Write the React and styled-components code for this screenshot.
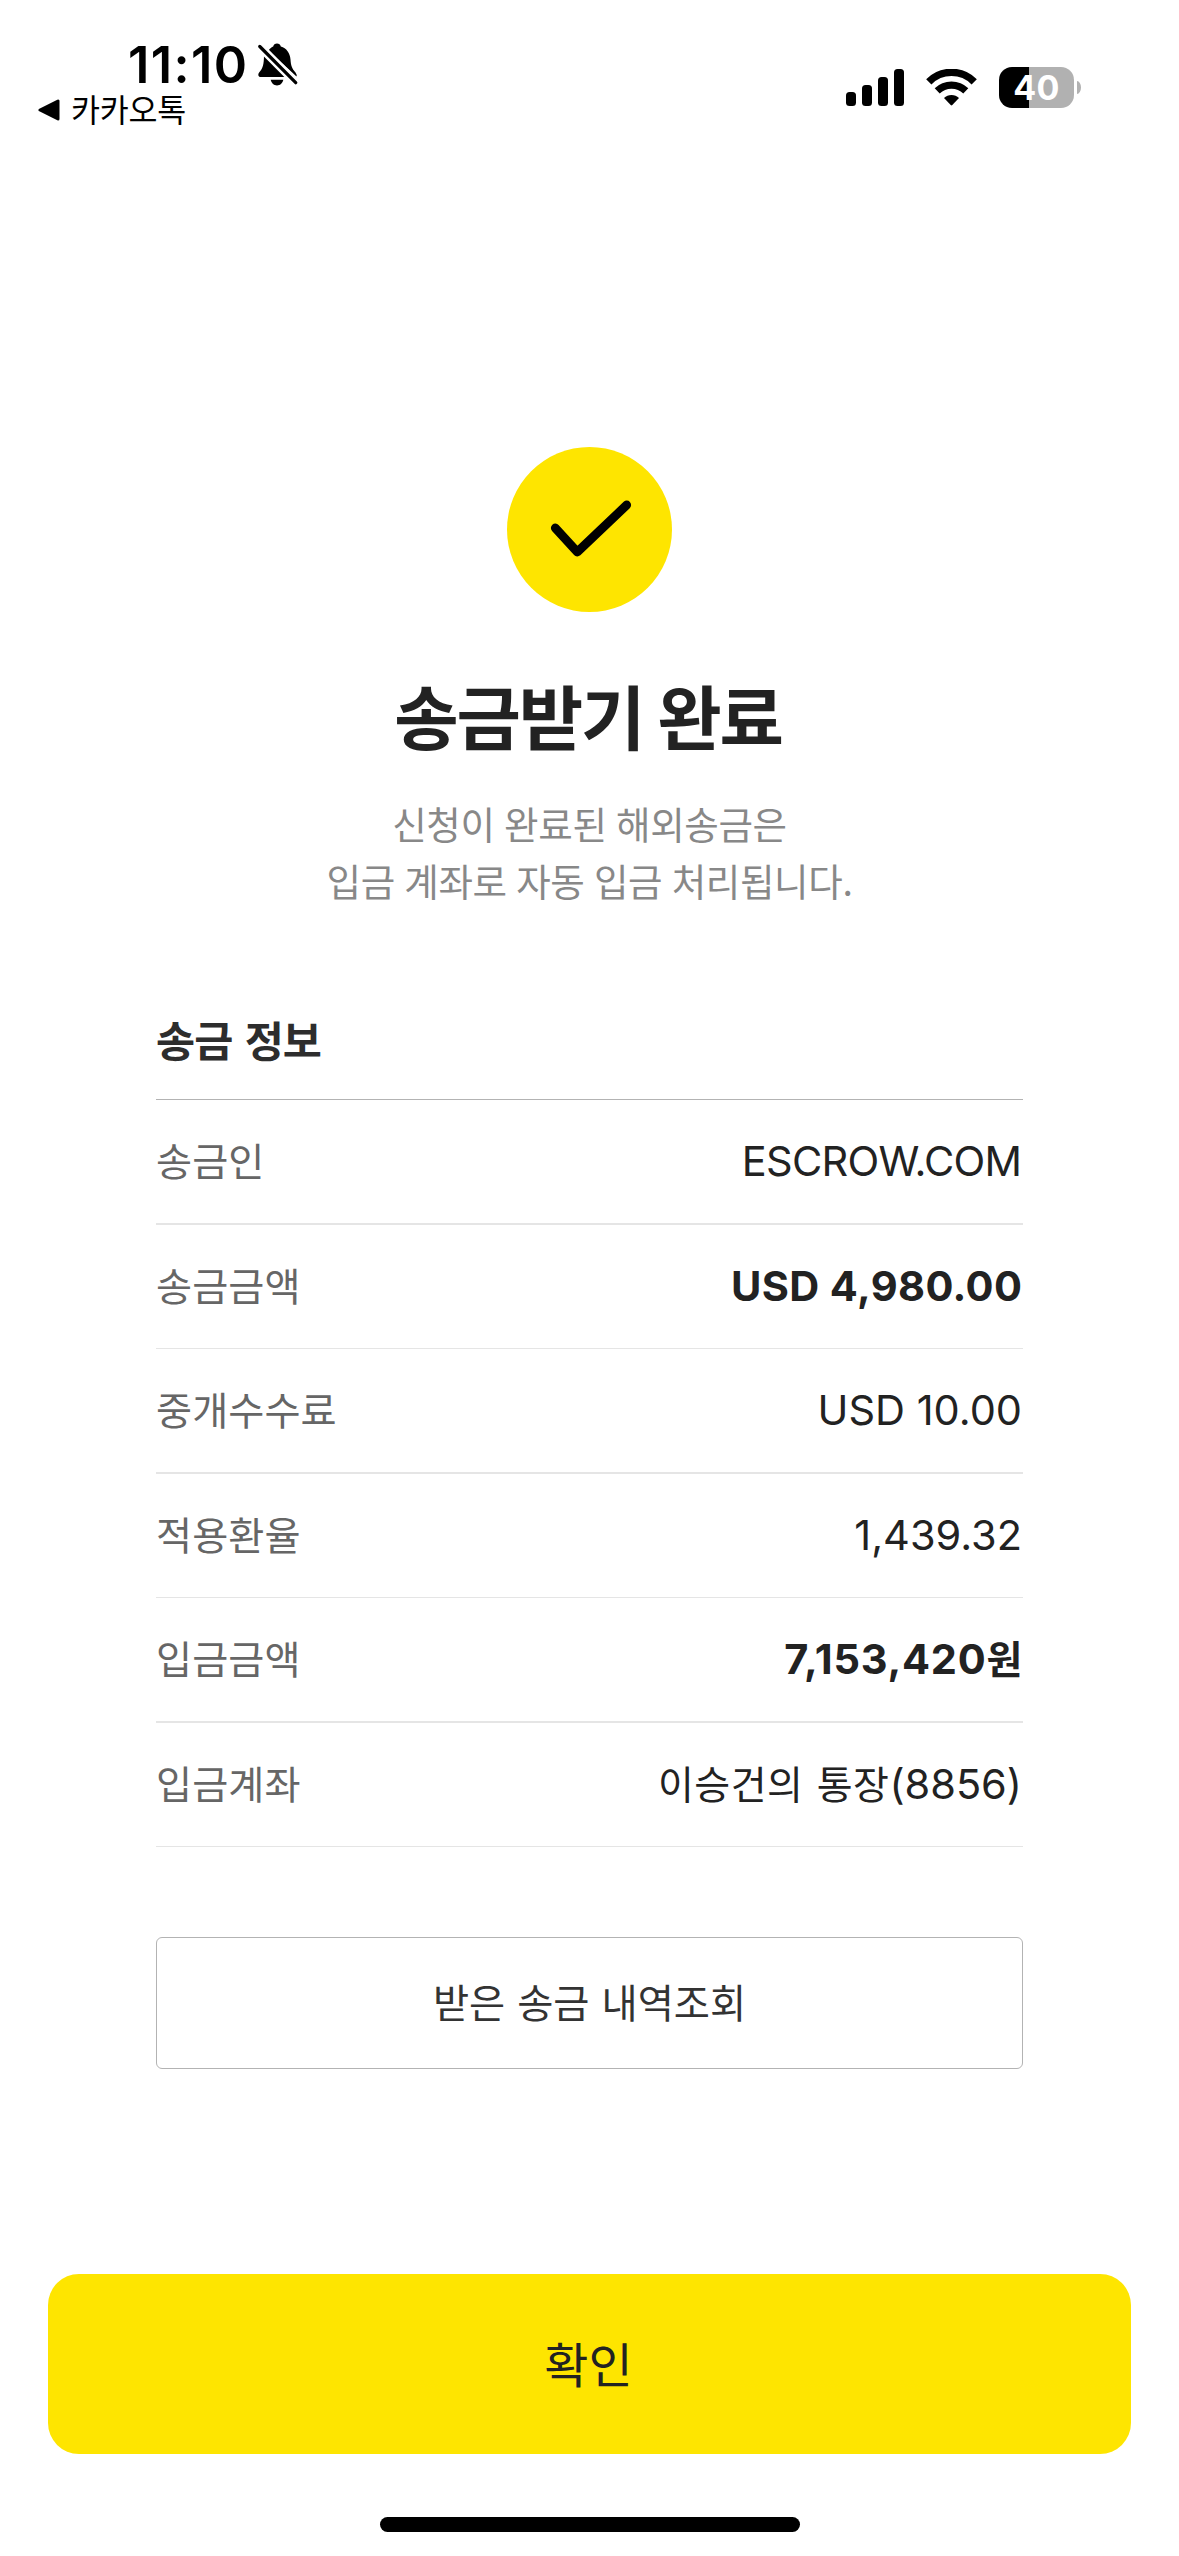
import React from "react";
import styled, { createGlobalStyle } from "styled-components";

const hangul = `"Noto Sans CJK KR", sans-serif`;
const latin = `Inter, "Noto Sans CJK KR", sans-serif`;

const GlobalStyle = createGlobalStyle`
  * { box-sizing: border-box; }
  body { margin: 0; background: #fff; }
  button { appearance: none; margin: 0; cursor: pointer; }
`;

const Screen = styled.div`
  display: flex;
  flex-direction: column;
  width: 1179px;
  height: 2556px;
  background: #fff;
  color: #222;
  font-family: ${hangul};
`;

const StatusBar = styled.header`
  display: flex;
  justify-content: space-between;
  height: 447px;
  padding: 35px 98px 0 38px;
  color: #000;
`;

const StatusLeft = styled.div`
  display: flex;
  flex-direction: column;
`;

const ClockRow = styled.div`
  display: flex;
  align-items: center;
  gap: 10px;
  height: 60px;
  padding-left: 90px;
`;

const Clock = styled.span`
  font: 600 50.5px/60px ${latin};
  letter-spacing: 1.4px;
`;

const BackLink = styled.div`
  display: flex;
  align-items: center;
  gap: 11px;
  height: 30px;
`;

const BackText = styled.span`
  padding-bottom: 4px;
  font-size: 31.5px;
  line-height: 26px;
  letter-spacing: -0.2px;
`;

const StatusRight = styled.div`
  display: flex;
  align-items: flex-start;
  padding-top: 32px;
`;

const Signal = styled.div`
  display: flex;
  align-items: flex-end;
  gap: 6px;
  height: 37px;
  margin: 2px 22px 0 0;
`;

const Bar = styled.span`
  width: 10px;
  height: ${(p) => p.$height}px;
  border-radius: 3.5px;
  background: #000;
`;

const WifiSvg = styled.svg`
  display: block;
  margin: 2px 22px 0 0;
`;

const Battery = styled.div`
  display: flex;
  align-items: center;
  gap: 3px;
`;

const BatteryBody = styled.div`
  display: flex;
  align-items: center;
  justify-content: center;
  width: 75px;
  height: 41px;
  border-radius: 13px;
  background: linear-gradient(to right, #000 30px, #b1b1b1 30px);
  color: #fff;
  font: 700 34px/41px ${latin};
  letter-spacing: 0.3px;
`;

const BatteryCap = styled.span`
  width: 4px;
  height: 13px;
  border-radius: 0 4px 4px 0 / 0 6.5px 6.5px 0;
  background: #b1b1b1;
`;

const Hero = styled.section`
  display: flex;
  flex-direction: column;
  align-items: center;
  text-align: center;
`;

const Badge = styled.div`
  width: 165px;
  height: 165px;
  border-radius: 50%;
  background: #fee500;
`;

const Title = styled.h1`
  margin: 54px 0 0;
  padding-right: 3px;
  font-size: 70px;
  font-weight: 700;
  line-height: 98px;
  letter-spacing: -2.1px;
`;

const Subtitle = styled.p`
  margin: 30px 0 0;
  color: #888;
  font-size: 37.5px;
  line-height: 57px;
  letter-spacing: -0.35px;
  word-spacing: 1.4px;
`;

const Details = styled.section`
  margin: 99px 156px 0;
`;

const SectionTitle = styled.h2`
  height: 93px;
  margin: 0;
  border-bottom: 1px solid #b3b3b3;
  color: #2d2d2d;
  font-size: 42.5px;
  font-weight: 700;
  line-height: 64px;
  letter-spacing: -0.9px;
  word-spacing: 3.5px;
`;

const Rows = styled.dl`
  margin: 0;
`;

const Row = styled.div`
  display: flex;
  align-items: baseline;
  justify-content: space-between;
  height: 124px;
  padding-top: 29px;
  border-bottom: 1px solid #e5e5e5;

  &:nth-child(odd) {
    height: 125px;
    border-bottom-width: 2px;
  }
`;

const Label = styled.dt`
  color: #666;
  font-size: 39.2px;
  line-height: 60px;
  letter-spacing: 0.1px;
`;

const Value = styled.dd`
  margin: 0 ${(p) => -(p.$tracking || 0)}px 0 0;
  padding-right: 1px;
  font: ${(p) => (p.$strong ? 700 : 400)} 41.5px/60px ${latin};
  letter-spacing: ${(p) => p.$tracking || 0}px;
`;

const Korean = styled.span`
  font-family: ${hangul};
  font-size: 39px;
  line-height: 1;
  letter-spacing: 0.4px;
  word-spacing: 4.5px;
`;

const OutlineButton = styled.button`
  height: 132px;
  margin: 90px 156px 0;
  padding: 0 0 5px;
  border: 1px solid #b3b3b3;
  border-radius: 6px;
  background: #fff;
  color: #333;
  font: 400 39.3px/56px ${hangul};
  word-spacing: 3.2px;
`;

const PrimaryButton = styled.button`
  height: 180px;
  margin: 205px 48px 0;
  padding: 0 2px 5px 0;
  border: 0;
  border-radius: 31px;
  background: #fee500;
  color: #222;
  font: 400 48px/70px ${hangul};
`;

const HomeIndicator = styled.div`
  align-self: center;
  width: 420px;
  height: 15px;
  margin-top: 63px;
  border-radius: 8px;
  background: #000;
`;

const bars = [14, 21, 29, 37];

const rows = [
  { label: "송금인", value: "ESCROW.COM", tracking: -0.75 },
  { label: "송금금액", value: "USD 4,980.00", strong: true, tracking: 0.4 },
  { label: "중개수수료", value: "USD 10.00" },
  { label: "적용환율", value: "1,439.32" },
  { label: "입금금액", value: <>7,153,420<Korean>원</Korean></>, strong: true, tracking: 0.75 },
  { label: "입금계좌", value: <><Korean>이승건의 통장</Korean>(8856)</> },
];

const SilentBell = () => (
  <svg width="40" height="44" viewBox="0 0 40 44">
    <path
      d="M10.500 7.500C12 5.500 13.700 4.300 15.200 3.600C15.600 1.600 17 .6 19 .6s3.400 1 3.800 3C28.500 5.300 32 10 32.500 16.500C32.800 22.500 34 25.500 37.500 29.500Q39 31.500 38.500 33.500Z"
      fill="#000"
    />
    <path d="M6 12.500C5.800 22 5 25 1.300 29.200C-.7 31.700.5 34 3 34H27.500Z" fill="#000" />
    <path d="M12.700 36.800H25.300C24.300 40.800 22 42.500 19 42.500S13.700 40.800 12.700 36.800Z" fill="#000" />
    <path d="M1.800 3.500L37.700 39.700" stroke="#fff" strokeWidth="8.200" />
    <path d="M1.800 3.500L37.700 39.700" stroke="#000" strokeWidth="3.200" strokeLinecap="round" />
  </svg>
);

const BackArrow = () => (
  <svg width="22" height="22" viewBox="0 0 22 22">
    <path d="M2 11L20 2V20Z" fill="#000" stroke="#000" strokeWidth="3" strokeLinejoin="round" />
  </svg>
);

const Wifi = () => (
  <WifiSvg width="51" height="37" viewBox="0 0 51 37">
    <path d="M2.800 12.800A32 32 0 0 1 48.200 12.800" fill="none" stroke="#000" strokeWidth="7.400" />
    <path d="M11.200 21.900A20.500 20.500 0 0 1 39.800 21.900" fill="none" stroke="#000" strokeWidth="7.200" />
    <path d="M18 29A10.600 10.600 0 0 1 33 29L26.300 36.100Q25.500 36.900 24.700 36.100Z" fill="#000" />
  </WifiSvg>
);

const Check = () => (
  <svg width="165" height="165" viewBox="0 0 165 165">
    <path
      d="M48.300 81L70.300 105L119.700 58"
      fill="none"
      stroke="#000"
      strokeWidth="8.800"
      strokeLinecap="round"
      strokeLinejoin="round"
    />
  </svg>
);

export default function App() {
  return (
    <Screen>
      <GlobalStyle />
      <StatusBar>
        <StatusLeft>
          <ClockRow>
            <Clock>11:10</Clock>
            <SilentBell />
          </ClockRow>
          <BackLink>
            <BackArrow />
            <BackText>카카오톡</BackText>
          </BackLink>
        </StatusLeft>
        <StatusRight>
          <Signal>
            {bars.map((height) => (
              <Bar key={height} $height={height} />
            ))}
          </Signal>
          <Wifi />
          <Battery>
            <BatteryBody>40</BatteryBody>
            <BatteryCap />
          </Battery>
        </StatusRight>
      </StatusBar>
      <Hero>
        <Badge>
          <Check />
        </Badge>
        <Title>송금받기 완료</Title>
        <Subtitle>
          신청이 완료된 해외송금은
          <br />
          입금 계좌로 자동 입금 처리됩니다.
        </Subtitle>
      </Hero>
      <Details>
        <SectionTitle>송금 정보</SectionTitle>
        <Rows>
          {rows.map((row) => (
            <Row key={row.label}>
              <Label>{row.label}</Label>
              <Value $strong={row.strong} $tracking={row.tracking}>
                {row.value}
              </Value>
            </Row>
          ))}
        </Rows>
      </Details>
      <OutlineButton>받은 송금 내역조회</OutlineButton>
      <PrimaryButton>확인</PrimaryButton>
      <HomeIndicator />
    </Screen>
  );
}
